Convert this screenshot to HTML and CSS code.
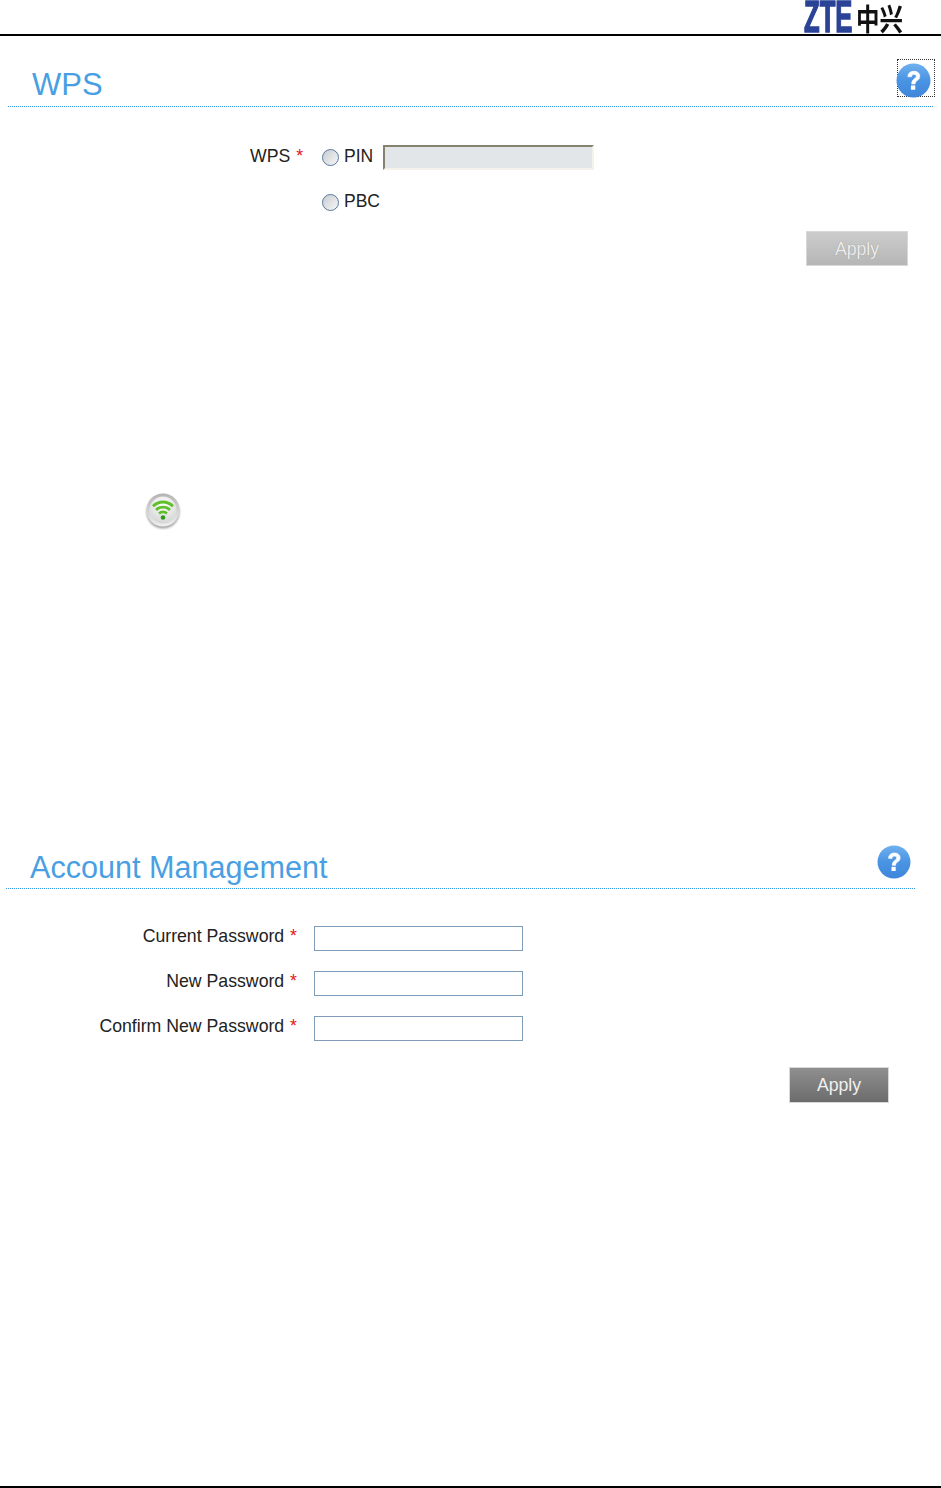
FILE: index.html
```html
<!DOCTYPE html>
<html>
<head>
    <meta charset="utf-8">
    <link rel="stylesheet" href="styles.css">
    <title>WPS</title>
</head>

<body>
    <svg class="defs" width="0" height="0">
        <defs>
            <linearGradient id="helpFill" x1="0" y1="0" x2="0" y2="1">
                <stop offset="0" stop-color="#6fb0ee"/>
                <stop offset="0.5" stop-color="#4a94e4"/>
                <stop offset="1" stop-color="#3f86da"/>
            </linearGradient>
            <symbol id="help" viewBox="0 0 34 34">
                <circle cx="17" cy="17" r="16.5" fill="url(#helpFill)"/>
                <path d="M11.500 13.200c.3-3.400 2.700-5.200 5.900-5.200 3.300 0 5.700 1.900 5.700 4.800 0 2.100-1.100 3.200-2.600 4.300-1.300.9-1.900 1.600-1.900 3.200h-3.300c0-2.500.8-3.700 2.500-4.900 1.200-.9 1.900-1.500 1.900-2.500 0-1.200-.9-1.900-2.200-1.900-1.400 0-2.300.8-2.500 2.400z" fill="#fff" stroke="#fff" stroke-width="0.7"/>
                <rect x="14.500" y="21.800" width="4.200" height="4.200" fill="#fff"/>
            </symbol>
        </defs>
    </svg>

    <div class="header">
        <div class="logo"><span class="logo-zte">ZTE</span><span class="logo-cn">中兴</span></div>
    </div>

    <div class="wps-section">
        <div class="title-row">
            <h1>WPS</h1>
            <a class="help-btn focused"><svg width="35" height="35"><use href="#help"/></svg></a>
        </div>
        <div class="wps-form">
            <div class="wps-row">
                <label class="wps-label">WPS <span class="req">*</span></label>
                <span class="radio"></span>
                <span class="radio-text">PIN</span>
                <input type="text" class="pin-input" disabled>
            </div>
            <div class="wps-row pbc-row">
                <span class="radio"></span>
                <span class="radio-text">PBC</span>
            </div>
        </div>
        <div class="btn-row">
            <button class="btn btn-disabled" disabled>Apply</button>
        </div>
    </div>

    <div class="wifi-icon">
        <svg width="38" height="38" viewBox="0 0 38 38">
            <defs>
                <linearGradient id="wifiRing" x1="0" y1="0" x2="0" y2="1">
                    <stop offset="0" stop-color="#b4b4b4"/>
                    <stop offset="1" stop-color="#efefef"/>
                </linearGradient>
                <radialGradient id="wifiFace" cx="0.5" cy="0.3" r="0.75">
                    <stop offset="0" stop-color="#ffffff"/>
                    <stop offset="1" stop-color="#d2d2d2"/>
                </radialGradient>
                <filter id="wifiShadow" x="-20%" y="-20%" width="140%" height="140%">
                    <feGaussianBlur stdDeviation="1.200"/>
                </filter>
            </defs>
            <circle cx="18" cy="20" r="16.500" fill="#555555" opacity="0.55" filter="url(#wifiShadow)"/>
            <circle cx="18" cy="18" r="16.500" fill="url(#wifiRing)"/>
            <circle cx="18" cy="18" r="13.500" fill="url(#wifiFace)"/>
            <path d="M8 14.200c5.800-5.600 14.200-5.600 20 0M11 18c4-3.800 10-3.800 14 0M14 21.500c2.300-2 5.700-2 8 0" fill="none" stroke="#5fc02c" stroke-width="2.800"/>
            <circle cx="18" cy="25.500" r="2.300" fill="#2f9a1f"/>
        </svg>
    </div>

    <div class="account-section">
        <div class="title-row">
            <h1>Account Management</h1>
            <a class="help-btn"><svg width="34" height="34"><use href="#help"/></svg></a>
        </div>
        <div class="account-form">
            <div class="form-row">
                <label>Current Password <span class="req">*</span></label>
                <input type="password" class="text-input">
            </div>
            <div class="form-row">
                <label>New Password <span class="req">*</span></label>
                <input type="password" class="text-input">
            </div>
            <div class="form-row">
                <label>Confirm New Password <span class="req">*</span></label>
                <input type="password" class="text-input">
            </div>
        </div>
        <div class="btn-row">
            <button class="btn">Apply</button>
        </div>
    </div>

    <div class="footer"></div>
</body>
</html>
```

FILE: styles.css
```css
html, body {
    margin: 0;
    padding: 0;
}
body {
    background-color: #ffffff;
    font-family: "Liberation Sans", Arial, sans-serif;
    color: #222222;
    width: 941px;
    height: 1488px;
    display: flex;
    flex-direction: column;
    overflow: hidden;
}
.defs {
    position: absolute;
}
.header {
    height: 34px;
    border-bottom: 2px solid #000000;
    display: flex;
    justify-content: flex-end;
    flex: none;
}
.logo {
    margin-right: 38px;
    display: flex;
    height: 34px;
    width: 99px;
}
.logo-zte {
    font-weight: bold;
    font-size: 45px;
    line-height: 33px;
    color: #2b4396;
    -webkit-text-stroke: 1.500px #2b4396;
    display: block;
    width: 52px;
    flex: none;
    white-space: nowrap;
    transform: scaleX(0.57);
    transform-origin: left center;
}
.logo-cn {
    font-family: "Noto Sans CJK SC", sans-serif;
    font-weight: bold;
    font-size: 23.500px;
    line-height: 26px;
    height: 26px;
    margin-top: 4px;
    color: #111111;
    white-space: nowrap;
    transform: scaleY(1.25);
}
h1 {
    font-weight: normal;
    font-size: 30.6px;
    line-height: 36px;
    color: #4a9fe3;
    margin: 0;
}
.title-row {
    display: flex;
    justify-content: space-between;
    align-items: flex-end;
    border-bottom: 1px dotted #2f97e6;
}
.help-btn {
    display: block;
    width: 34px;
    height: 34px;
}
.req {
    color: #e02020;
    margin-left: 1px;
}
.radio {
    display: inline-block;
    box-sizing: border-box;
    width: 17px;
    height: 17px;
    border: 1.500px solid #55799c;
    border-radius: 50%;
    background: linear-gradient(135deg, #c8ccd0, #f7f7f7);
    flex: none;
}
.radio-text {
    font-size: 17.500px;
    margin-left: 5px;
    padding-bottom: 1px;
}

/* wps */
.wps-section {
    margin: 24px 8px 0 8px;
    flex: none;
}
.wps-section .title-row {
    height: 46px;
    padding: 0 0 0 24px;
}
.wps-section h1 {
    font-size: 31px;
    margin-bottom: 3px;
}
.help-btn.focused {
    box-sizing: border-box;
    width: 38px;
    height: 38px;
    margin-bottom: 9px;
    margin-right: -2px;
    padding: 3px 0 0 0;
    border: 1px dotted #333333;
}
.help-btn.focused svg {
    display: block;
    margin-left: -2px;
}
.wps-form {
    padding-left: 242px;
    margin-top: 37px;
}
.wps-row {
    display: flex;
    align-items: center;
    height: 26px;
    font-size: 17.700px;
}
.pbc-row {
    margin-top: 19px;
    padding-left: 72px;
}
.pbc-row .radio-text {
    padding-bottom: 2px;
}
.wps-label {
    width: 72px;
    flex: none;
    padding-bottom: 1px;
}
.pin-input {
    box-sizing: border-box;
    width: 211px;
    height: 25px;
    margin: 0 0 0 10px;
    background-color: #e3e6e8;
    border: 2px solid #f4f2ea;
    border-top-color: #85826f;
    border-left-color: #85826f;
    padding: 0;
}
.btn-row {
    display: flex;
    justify-content: flex-end;
}
.wps-section .btn-row {
    margin-top: 16px;
    padding-right: 25px;
}
.btn {
    width: 102px;
    height: 35px;
    font-family: "Liberation Sans", sans-serif;
    font-size: 17.700px;
    color: #f0f0f0;
    border: 1px solid #d8d8d8;
    padding: 2px 0 0 0;
    background: linear-gradient(#8f8f8f, #6c6c6c);
}
.btn-disabled {
    color: #ededed;
    text-shadow: 0 0 1px #8a8a8a;
    background: linear-gradient(#cccccc, #b6b6b6);
}

/* status icon */
.wifi-icon {
    margin: 226px 0 0 145px;
    height: 38px;
    flex: none;
}

/* account */
.account-section {
    margin: 313px 26px 0 6px;
    flex: none;
}
.account-section .title-row {
    height: 45px;
    padding: 0 4px 0 24px;
}
.account-section h1 {
    margin-bottom: 3px;
}
.account-section .help-btn {
    margin-bottom: 9px;
}
.account-form {
    margin-top: 37px;
    display: flex;
    flex-direction: column;
    gap: 19px;
}
.form-row {
    display: flex;
    align-items: center;
    height: 26px;
    font-size: 17.700px;
}
.form-row label {
    box-sizing: border-box;
    width: 291px;
    text-align: right;
    flex: none;
    padding-bottom: 6px;
}
.text-input {
    box-sizing: border-box;
    align-self: flex-start;
    width: 209px;
    height: 25px;
    margin: 0 0 0 17px;
    border: 1px solid #7f9db9;
    background: #ffffff;
    padding: 0;
}
.account-section .btn-row {
    margin-top: 25px;
    padding-right: 26px;
}
.account-section .btn {
    width: 100px;
    height: 36px;
    padding-top: 0;
}

.footer {
    margin-top: auto;
    height: 2px;
    background-color: #000000;
    flex: none;
}
```
